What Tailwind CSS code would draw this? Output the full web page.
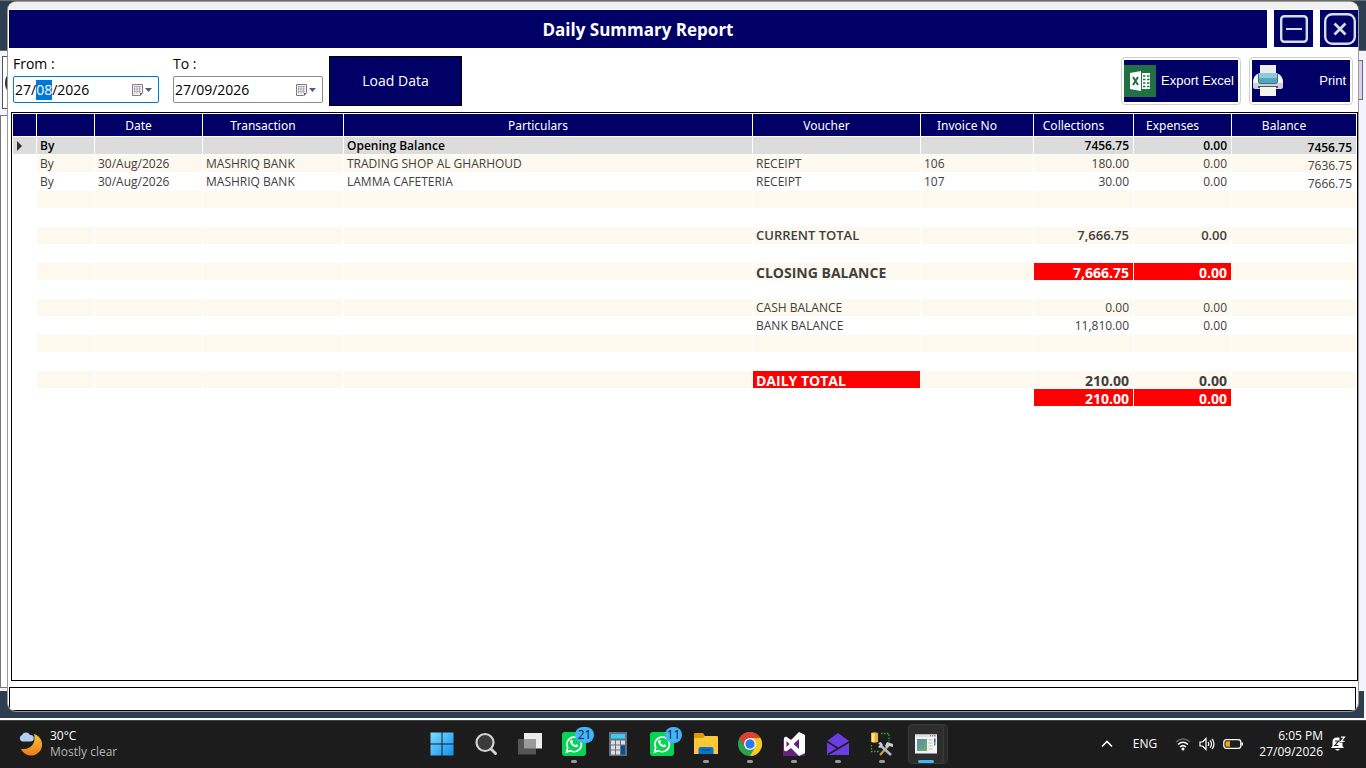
<!DOCTYPE html>
<html lang="en">
<head>
  <meta charset="UTF-8">
  <meta name="viewport" content="width=device-width, initial-scale=1.0">
  <title>Daily Summary Report</title>
  <script src="https://cdn.jsdelivr.net/npm/@tailwindcss/browser@4"></script>
</head>
<body class="min-h-screen flex flex-col bg-[#f3f3fb] font-['Open_Sans',sans-serif] text-black">

  <!-- Desktop area with the report window -->
  <main class="relative flex-1 flex flex-col px-2 pt-px pb-[7px] border-t border-[#6b6b6b]">

    <!-- Parent window showing behind the report -->
    <div class="absolute inset-0 flex flex-col" aria-hidden="true">
      <div class="h-[50px] bg-[#2d3e50] border-b border-[#6b6b6b]"></div>
      <div class="flex justify-between pt-[5px]">
        <div class="w-8 h-[53px] ml-0.5 border border-[#555] bg-white flex items-center">
          <div class="size-7 ml-0.5 border-2 border-[#333] rounded-full"></div>
        </div>
        <div class="w-8 h-10 mt-1 mr-[3px] border border-[#6b6b6b] bg-[#dccdf7]"></div>
      </div>
      <div class="flex-1 mt-[6px] mb-[3px] mr-8 border border-[#777] bg-white"></div>
      <div class="h-[27px] mr-0.5 bg-[#2d3e50]"></div>
    </div>

    <!-- Report window -->
    <section class="relative flex-1 flex flex-col bg-white rounded-lg pl-px shadow-[0_0_0_1px_#9a9a9a] overflow-hidden">
      <div class="h-[7px] -ml-px bg-[#f0f0f0]"></div>

      <!-- Title bar -->
      <header class="flex mt-px gap-[7px]">
        <h1 class="flex-1 h-[38px] pt-px bg-[#000066] text-white text-[17px] font-bold flex items-center justify-center">Daily Summary Report</h1>
        <button type="button" aria-label="Minimize" class="w-[39px] h-[37px] bg-[#000066]">
          <svg class="w-[39px] h-[37px]" viewBox="0 0 39 37" fill="none" stroke="#d3dfe4" stroke-width="2.400">
            <rect x="7.200" y="6.200" width="25.600" height="25.600" rx="3"/>
            <path d="M12 19h16" stroke-width="2"/>
          </svg>
        </button>
        <button type="button" aria-label="Close" class="w-[38px] h-[37px] bg-[#000066]">
          <svg class="w-[38px] h-[37px]" viewBox="0 0 38 37" fill="none" stroke="#d3dfe4" stroke-width="2.400">
            <rect x="5.200" y="4.200" width="29.600" height="29.600" rx="7"/>
            <path d="M14.500 13.500l11 11m0-11l-11 11" stroke-width="2.800"/>
          </svg>
        </button>
      </header>

      <!-- Filters and actions -->
      <div class="flex items-start mt-2 pl-1 pr-[5px]">
        <div class="w-40">
          <label for="from-date" class="block text-sm leading-5 h-5 -mt-0.5">From :</label>
          <div class="flex items-center w-[146px] h-[27px] mt-0.5 border border-[#8a8a8a] rounded-xs focus-within:border-[#0078d7]">
            <input id="from-date" type="text" value="27/08/2026" class="w-[117px] pl-px text-sm outline-none selection:bg-[#0078d7] selection:text-white">
            <button type="button" aria-label="Open calendar">
              <svg class="w-[22px] h-4" viewBox="0 0 22 16"><path d="M1.500 2.500h10v8l-3 3h-7z" fill="#f2f2f4" stroke="#87797c"/><path d="M3 4.500h7M3 7h7M3 9.500h7M3.500 4v7.500M6 4v7.500M8.500 4v7" stroke="#a0a4b4" stroke-width=".8"/><path d="M12 11l-3 3v-3z" fill="#6a5b5e"/><path d="M14 6h7l-3.500 4z" fill="#44608c"/></svg>
            </button>
          </div>
        </div>
        <div class="w-[156px]">
          <label for="to-date" class="block text-sm leading-5 h-5 -mt-0.5">To :</label>
          <div class="flex items-center w-[150px] h-[27px] mt-0.5 border border-[#8a8a8a] rounded-xs focus-within:border-[#0078d7]">
            <input id="to-date" type="text" value="27/09/2026" class="w-[121px] pl-px text-sm outline-none selection:bg-[#0078d7] selection:text-white">
            <button type="button" aria-label="Open calendar">
              <svg class="w-[22px] h-4" viewBox="0 0 22 16"><path d="M1.500 2.500h10v8l-3 3h-7z" fill="#f2f2f4" stroke="#87797c"/><path d="M3 4.500h7M3 7h7M3 9.500h7M3.500 4v7.500M6 4v7.500M8.500 4v7" stroke="#a0a4b4" stroke-width=".8"/><path d="M12 11l-3 3v-3z" fill="#6a5b5e"/><path d="M14 6h7l-3.500 4z" fill="#44608c"/></svg>
            </button>
          </div>
        </div>
        <button type="button" class="w-[133px] h-[50px] bg-[#000066] border border-black text-white text-sm">Load Data</button>

        <div class="ml-auto flex gap-2">
          <button type="button" class="flex w-[120px] h-12 mt-px p-0.5 border border-[#cfcfcf] rounded-sm font-['Liberation_Sans',sans-serif] text-[13px] text-white">
            <span class="flex-1 h-[42px] bg-[#000066] flex items-center justify-between pr-1">
              <svg class="size-8" viewBox="0 0 32 32"><path d="M0 0h32v32H0z" fill="#207245"/><path d="M6 8l11-2v20L6 24z" fill="#fff"/><path d="M18 8h8v16h-8z" fill="#fff"/><path d="M19 11h2.500m1.500 0h2.500M19 14.500h2.500m1.500 0h2.500M19 18h2.500m1.500 0h2.500M19 21.500h2.500m1.500 0h2.500" stroke="#207245" stroke-width="1.500"/><path d="M9 12l5 8m0-8l-5 8" stroke="#207245" stroke-width="2"/></svg>
              Export Excel
            </span>
          </button>
          <button type="button" class="flex w-[104px] h-12 mt-px p-0.5 border border-[#cfcfcf] rounded-sm font-['Liberation_Sans',sans-serif] text-[13px] text-white">
            <span class="flex-1 h-[42px] bg-[#000066] flex items-center justify-between pr-1">
              <svg class="size-8" viewBox="0 0 32 32"><path d="M8 0h16v10H8z" fill="#ececec"/><path d="M5 9h22q4 3 4 8v4q0 3-3 3H4q-3 0-3-3v-4q0-5 4-8z" fill="#f4f4f6"/><path d="M1 18h30v3q0 3-3 3H4q-3 0-3-3z" fill="#cfd0d5"/><path d="M6 8h20v8q0 3-3 3H9q-3 0-3-3z" fill="#31788f"/><path d="M7 8h18v5H7z" fill="#8ccbdc"/><path d="M7 13h18v3q0 2-2 2H9q-2 0-2-2z" fill="#58a5bd"/><path d="M6 21h20v2H6z" fill="#55565a"/><path d="M8 22h16v9H8z" fill="#f4f4f4"/></svg>
              Print
            </span>
          </button>
        </div>
      </div>

      <!-- Report grid -->
      <div class="flex-1 mt-[6px] ml-0.5 border border-black pl-px pt-px">
        <table class="w-full table-fixed border-separate border-spacing-0 text-xs leading-[17px] font-medium text-[#404040]">
          <colgroup>
            <col class="w-6"><col class="w-[58px]"><col class="w-[108px]"><col class="w-[141px]"><col><col class="w-[168px]"><col class="w-[113px]"><col class="w-[100px]"><col class="w-[98px]"><col class="w-[125px]">
          </colgroup>
          <thead id="grid-head" class="font-['Noto_Sans',sans-serif]"></thead>
          <tbody id="grid-body"></tbody>
        </table>
      </div>

      <div class="h-6 mt-[6px] mr-0.5 border border-black"></div>
    </section>
  </main>

  <!-- Taskbar -->
  <footer class="h-[50px] bg-[#1c1c1c] border-t-2 border-white grid grid-cols-[1fr_auto_1fr] text-xs text-white shadow-[inset_0_1px_0_#444]">
    <div class="flex items-center gap-2 pl-[18px]">
      <svg class="size-6" viewBox="0 0 24 24">
        <defs><linearGradient id="moon" x1="0" y1="0" x2="0" y2="1"><stop offset="0" stop-color="#f8c43a"/><stop offset="1" stop-color="#ef7a16"/></linearGradient></defs>
        <path d="M16 2a11 11 0 1 1-13 15q10 1 13-7 1-4 0-8z" fill="url(#moon)"/>
        <path d="M4 9.500a3.500 3.500 0 0 1 0-6.500 4.500 4.500 0 0 1 8 0 3 3 0 0 1 1 6.500z" fill="#b4cdf5"/>
      </svg>
      <div class="leading-4">
        <p>30°C</p>
        <p class="text-[#b5b5b5]">Mostly clear</p>
      </div>
    </div>

    <nav class="flex pl-0.5" aria-label="Taskbar apps">
      <a href="#" aria-label="Start" class="w-11 flex items-center justify-center">
        <svg class="size-6" viewBox="0 0 24 24"><defs><linearGradient id="win" x1="0" y1="0" x2="1" y2="1"><stop offset="0" stop-color="#7ddcff"/><stop offset="1" stop-color="#0c93f0"/></linearGradient></defs><path d="M.5.500h11v11H.5zM12.500.500h11v11h-11zM.5 12.500h11v11H.5zM12.500 12.500h11v11h-11z" fill="url(#win)"/></svg>
      </a>
      <a href="#" aria-label="Search" class="w-11 flex items-center justify-center">
        <svg class="size-6" viewBox="0 0 24 24" fill="#3a3a3a" stroke="#d2d2d2" stroke-linecap="round"><path d="M17.500 17.500l4 4" stroke-width="3"/><circle cx="11" cy="10.500" r="8.500" stroke-width="2.200"/></svg>
      </a>
      <a href="#" aria-label="Task view" class="w-11 flex items-center justify-center">
        <svg class="size-6" viewBox="0 0 24 24"><path d="M6 1h18v15.500H6z" fill="#ececec"/><path d="M0 7h18v15.500H0z" fill="#555"/><path d="M6 7h12v9.500H6z" fill="#9a9a9a"/></svg>
      </a>
      <a href="#" aria-label="WhatsApp" class="relative w-11 flex items-center justify-center">
        <svg class="size-6" viewBox="0 0 24 24"><rect width="24" height="24" rx="3" fill="#06d455"/><path d="M4.500 20l1.200-4.200a7.300 7.300 0 1 1 2.800 2.900z" fill="none" stroke="#fff" stroke-width="1.600"/><path d="M9 8q1.200-.8 1.600.6.600 1-.4 1.700 1 2.200 3 3 1-1.300 1.600-.9l1.500.8q-.2 2.300-2.600 2.100-4.600-1.100-5.700-5.200-.1-1.300 1-2.100z" fill="#fff"/></svg>
        <span class="absolute top-[7px] right-0.5 h-4 min-w-[19px] rounded-full bg-[#41b5fb] text-[#10202c] text-xs leading-4 text-center">21</span>
        <span class="absolute bottom-[5px] w-[6px] h-[3px] rounded-full bg-[#9a9a9a]"></span>
      </a>
      <a href="#" aria-label="Calculator" class="w-11 flex items-center justify-center">
        <svg class="size-6" viewBox="0 0 24 24"><path d="M3 0h18v24H3z" fill="#66707c"/><path d="M5 2h14v4.500H5z" fill="#35cdf2"/><path d="M5 8.500h4v4H5zM10 8.500h4v4h-4zM15 8.500h4v4h-4zM5 13.500h4v4H5zM10 13.500h4v4h-4zM5 18.500h4v4H5zM10 18.500h4v4h-4z" fill="#d9dde2"/><path d="M15 13.500h4v9h-4z" fill="#124a8f"/></svg>
      </a>
      <a href="#" aria-label="WhatsApp Business" class="relative w-11 flex items-center justify-center">
        <svg class="size-6" viewBox="0 0 24 24"><rect width="24" height="24" rx="3" fill="#06d455"/><path d="M4.500 20l1.200-4.200a7.300 7.300 0 1 1 2.800 2.900z" fill="none" stroke="#fff" stroke-width="1.600"/><path d="M9 8q1.200-.8 1.600.6.600 1-.4 1.700 1 2.200 3 3 1-1.300 1.600-.9l1.500.8q-.2 2.300-2.600 2.100-4.600-1.100-5.700-5.200-.1-1.300 1-2.100z" fill="#fff"/></svg>
        <span class="absolute top-[7px] right-0.5 h-4 min-w-[17px] rounded-full bg-[#41b5fb] text-[#10202c] text-xs leading-4 text-center">11</span>
      </a>
      <a href="#" aria-label="File Explorer" class="relative w-11 flex items-center justify-center">
        <svg class="size-6" viewBox="0 0 24 24"><path d="M0 2q0-1 1-1h8l2 3v4H0z" fill="#dc9a06"/><path d="M0 6h9l2-2h12q1 0 1 1v17H0z" fill="#fdc838"/><path d="M4.500 22v-5q0-2 2-2h11q2 0 2 2v5z" fill="#0a74cc"/><path d="M8 18h8" stroke="#0b4f91" stroke-width="1.200"/></svg>
        <span class="absolute bottom-[5px] w-[6px] h-[3px] rounded-full bg-[#9a9a9a]"></span>
      </a>
      <a href="#" aria-label="Chrome" class="relative w-11 flex items-center justify-center">
        <svg class="size-6" viewBox="0 0 24 24"><circle cx="12" cy="12" r="12" fill="#2fa04f"/><path d="M12 12L1.600 6A12 12 0 0 1 22.400 6z" fill="#e0402f"/><path d="M12 6h10.400A12 12 0 0 1 12 24l5.200-9z" fill="#fbc81f"/><path d="M1.600 6l5.200 9L12 6z" fill="#e0402f"/><circle cx="12" cy="12" r="6" fill="#fff"/><circle cx="12" cy="12" r="4.700" fill="#2a7af0"/></svg>
        <span class="absolute bottom-[5px] w-[6px] h-[3px] rounded-full bg-[#9a9a9a]"></span>
      </a>
      <a href="#" aria-label="Visual Studio" class="relative w-11 flex items-center justify-center">
        <svg class="size-6" viewBox="0 0 24 24"><path d="M1 7h22v17H1z" fill="#68217a"/><path d="M17 0l6 3v18l-6 3-8-8-5 3.500-2-1.200V5.700l2-1.200L9 8z" fill="#fff"/><path d="M4.500 9v6L7.500 12zM17 7l-5.500 5 5.500 5z" fill="#68217a"/></svg>
        <span class="absolute bottom-[5px] w-[6px] h-[3px] rounded-full bg-[#9a9a9a]"></span>
      </a>
      <a href="#" aria-label="Mail" class="relative w-11 flex items-center justify-center">
        <svg class="size-6" viewBox="0 0 24 24"><path d="M12 1l11 8v14H1V9z" fill="#6a3de0"/><path d="M1 9.500L11.500 16M23 10L2 22.500" stroke="#1c1c1c" stroke-width="1.500"/></svg>
        <span class="absolute bottom-[5px] w-[6px] h-[3px] rounded-full bg-[#9a9a9a]"></span>
      </a>
      <a href="#" aria-label="SQL Server Management Studio" class="relative w-11 flex items-center justify-center">
        <svg class="size-6" viewBox="0 0 24 24"><path d="M11 1.500h8v8M1.500 13v6.500h7" fill="none" stroke="#47a83c" stroke-width="1.300" stroke-dasharray="1.500 1.500"/><path d="M1 1q3-1.500 7 0v9q-4 1.500-7 0z" fill="#f0b429"/><path d="M2 1.500h2.500v8.500H2z" fill="#ffe69a"/><path d="M20 12l-10 11" stroke="#d39a43" stroke-width="2.200"/><path d="M10 13l11 10" stroke="#aebccb" stroke-width="2.500"/><path d="M8 11l3-1 2 3-3 3-2-1 2-2zM17 10l6 2v3l-4-1-2 2-2-2z" fill="#c3cedb"/></svg>
        <span class="absolute bottom-[5px] w-[6px] h-[3px] rounded-full bg-[#9a9a9a]"></span>
      </a>
      <a href="#" aria-label="Daily Summary Report" class="relative w-11 flex items-center justify-center">
        <span class="absolute inset-y-1 left-2 right-0 rounded-sm bg-[#2a2a2a] border border-[#333]"></span>
        <span class="absolute inset-y-1 left-1 right-1 rounded-sm bg-[#2d2d2d] border border-[#3b3b3b]"></span>
        <svg class="relative size-6" viewBox="0 0 24 24"><defs><linearGradient id="app" x1="0" y1="0" x2="1" y2="1"><stop offset="0" stop-color="#5a86b8"/><stop offset="1" stop-color="#6fb36a"/></linearGradient></defs><path d="M1 2.500h22v19H1z" fill="#f4f4f4"/><path d="M1 2.500h22v2.500H1z" fill="#dcdfe3"/><path d="M16 3.800h1m1 0h1m1 0h1.500" stroke="#a33"/><path d="M3 7h10v12H3z" fill="url(#app)"/><path d="M14.500 8h4m-4 3h4m-4 3h4m-4 3h4" stroke="#b9bcc0" stroke-width="1.200"/><path d="M20 6.500h1.500v4H20z" fill="#2b55a8"/><path d="M20 10.500h1.500v3H20z" fill="#4aa552"/></svg>
        <span class="absolute bottom-[5px] w-4 h-[3px] rounded-full bg-[#41b5fb]"></span>
      </a>
    </nav>

    <div class="flex items-center justify-end pr-5">
      <button type="button" aria-label="Show hidden icons" class="mr-5"><svg class="w-3 h-3" viewBox="0 0 12 12" fill="none" stroke="#fff" stroke-width="1.600"><path d="M1 8.500l5-5 5 5"/></svg></button>
      <span class="mr-[18px]">ENG</span>
      <svg class="w-4 h-4 mr-2" viewBox="0 0 16 16" fill="none" stroke-width="1.500"><path d="M1 6q7-6 14 0" stroke="#666"/><path d="M3 8.500q5-4.500 10 0M5 11q3-2.800 6 0" stroke="#fff"/><circle cx="8" cy="13" r="1.500" fill="#fff"/></svg>
      <svg class="w-4 h-4 mr-2" viewBox="0 0 16 16" fill="none" stroke="#fff" stroke-width="1.200"><path d="M1 6h2.500L7 2.500v11L3.500 10H1z"/><path d="M9 6q1.500 2 0 4M11 4.300q3 3.700 0 7.400M13 2.800q4 5.200 0 10.400"/></svg>
      <svg class="w-5 h-3 mr-4" viewBox="0 0 20 12" fill="none"><rect x=".8" y="1.700" width="17" height="8.600" rx="2.500" stroke="#fff" stroke-width="1.300"/><path d="M19.200 4.500v3" stroke="#fff" stroke-width="1.500"/><path d="M2.500 3.300H7v5.400H2.500z" fill="#eda60c"/></svg>
      <div class="text-right leading-4 mr-[7px]">
        <p>6:05 PM</p>
        <p>27/09/2026</p>
      </div>
      <svg class="w-4 h-4" viewBox="0 0 16 16"><path d="M1 12l1.500-2V6q0-4.500 4.500-4.500h5.500V10l1.500 2zM5 13h5q-2.500 3-5 0z" fill="#fff"/><path d="M5 5h3.500L5 9.500h3.500" fill="none" stroke="#1c1c1c" stroke-width="1.200"/><path d="M9.500 0H16v6.500h-6.500z" fill="#1c1c1c"/><path d="M11 1.200h3.500L11 5.300h3.500" fill="none" stroke="#fff" stroke-width="1.200"/></svg>
    </div>
  </footer>

  <script>
    const columns = ['', '', 'Date', 'Transaction', 'Particulars', 'Voucher', 'Invoice No', 'Collections', 'Expenses', 'Balance'];

    const blank = { cells: [] };
    const rows = [
      { style: 'current', cells: ['By', '', '', 'Opening Balance', '', '', '7456.75', '0.00', '7456.75'] },
      { cells: ['By', '30/Aug/2026', 'MASHRIQ BANK', 'TRADING SHOP AL GHARHOUD', 'RECEIPT', '106', '180.00', '0.00', '7636.75'] },
      { cells: ['By', '30/Aug/2026', 'MASHRIQ BANK', 'LAMMA CAFETERIA', 'RECEIPT', '107', '30.00', '0.00', '7666.75'] },
      blank,
      blank,
      { style: 'bold', cells: ['', '', '', '', 'CURRENT TOTAL', '', '7,666.75', '0.00', ''] },
      blank,
      { style: 'large', red: [6, 7], cells: ['', '', '', '', 'CLOSING BALANCE', '', '7,666.75', '0.00', ''] },
      blank,
      { cells: ['', '', '', '', 'CASH BALANCE', '', '0.00', '0.00', ''] },
      { cells: ['', '', '', '', 'BANK BALANCE', '', '11,810.00', '0.00', ''] },
      blank,
      blank,
      { style: 'large', red: [4], cells: ['', '', '', '', 'DAILY TOTAL', '', '210.00', '0.00', ''] },
      { style: 'large', red: [6, 7], cells: ['', '', '', '', '', '', '210.00', '0.00', ''] },
    ];

    const rowStyles = {
      current: 'font-semibold text-black',
      bold: 'font-semibold text-[13px] leading-[17px]',
      large: 'font-bold text-sm leading-[15px]',
    };

    const marker = '<svg class="w-2 h-3 ml-1" viewBox="0 0 8 12"><path d="M0 1l5 5-5 5z" fill="#333"/></svg>';

    // Cell background: the current row is grey, every second row is cream
    function cellColor(row, rowIndex, cellIndex) {
      if (row.red && row.red.includes(cellIndex)) return 'bg-[#ff0000] text-white';
      if (row.style === 'current') return 'bg-[#dcdcdc]';
      return rowIndex % 2 ? 'bg-[#fef9ee]' : 'bg-white';
    }

    function cellAlign(row, cellIndex) {
      if (cellIndex === 8) return 'text-right pr-1 pt-1 leading-[13px]';
      const align = cellIndex > 5 ? 'text-right pr-1' : 'text-left pl-[3px]';
      return row.style === 'large' ? align + ' pt-0.5' : align;
    }

    document.getElementById('grid-head').innerHTML = '<tr>' + columns.map(name =>
      `<th class="h-[23px] pr-5 bg-[#000066] text-white font-normal border-r border-b border-white">${name}</th>`
    ).join('') + '</tr>';

    document.getElementById('grid-body').innerHTML = rows.map((row, r) => {
      let html = `<tr class="${rowStyles[row.style] || ''}">`;
      html += `<td class="h-[18px] border-r border-b border-white ${row.style === 'current' ? 'bg-[#dcdcdc]' : ''}">${row.style === 'current' ? marker : ''}</td>`;
      for (let c = 0; c < 9; c++) {
        html += `<td class="h-[18px] border-r border-b border-white whitespace-nowrap ${cellAlign(row, c)} ${cellColor(row, r, c)}">${row.cells[c] || ''}</td>`;
      }
      return html + '</tr>';
    }).join('');

    const fromDate = document.getElementById('from-date');
    fromDate.focus();
    fromDate.setSelectionRange(3, 5);
  </script>
</body>
</html>
